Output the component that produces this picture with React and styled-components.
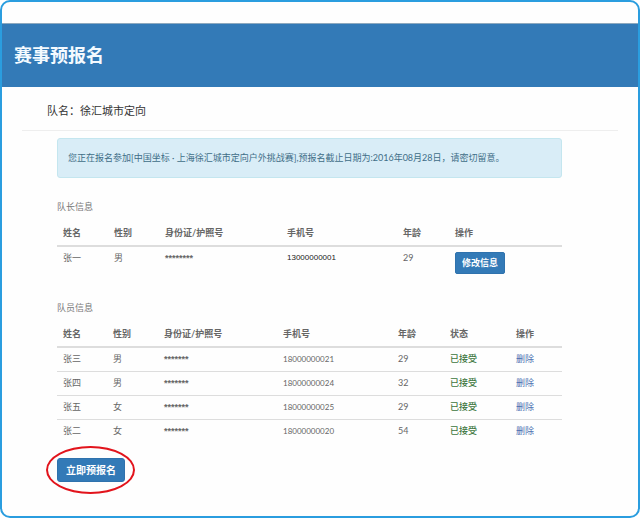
import styled, { createGlobalStyle, css } from 'styled-components';

const captain = {
    name: '张一', gender: '男', idCard: '********', phone: '13000000001', age: 29
};

const members = [
    { name: '张三', gender: '男', idCard: '*******', phone: '18000000021', age: 29, status: '已接受' },
    { name: '张四', gender: '男', idCard: '*******', phone: '18000000024', age: 32, status: '已接受' },
    { name: '张五', gender: '女', idCard: '*******', phone: '18000000025', age: 29, status: '已接受' },
    { name: '张二', gender: '女', idCard: '*******', phone: '18000000020', age: 54, status: '已接受' },
];

const captainColumns = [
    { title: '姓名', width: 51 },
    { title: '性别', width: 51 },
    { title: '身份证/护照号', width: 122 },
    { title: '手机号', width: 116 },
    { title: '年龄', width: 52 },
    { title: '操作', width: 113 },
];

const memberColumns = [
    { title: '姓名', width: 50 },
    { title: '性别', width: 51 },
    { title: '身份证/护照号', width: 119 },
    { title: '手机号', width: 115 },
    { title: '年龄', width: 52 },
    { title: '状态', width: 66 },
    { title: '操作', width: 52 },
];

const TableHead = ({ columns }) => (
    <>
        <colgroup>
            { columns.map(({ title, width }) => <Column key={title} $width={width} />) }
        </colgroup>
        <thead>
            <tr>
                { columns.map(({ title }) => <HeadCell key={title} scope="col">{title}</HeadCell>) }
            </tr>
        </thead>
    </>
);

const App = () => {
    return (
        <>
            <GlobalStyle />
            <Frame>
                <Header>
                    <Title>赛事预报名</Title>
                </Header>

                <TeamBar>队名：徐汇城市定向</TeamBar>

                <Content>
                    <Notice role="alert">
                        您正在报名参加[中国坐标 · 上海徐汇城市定向户外挑战赛],预报名截止日期为:2016年08月28日，请密切留意。
                    </Notice>

                    <Section $minHeight={101}>
                        <SectionTitle id="captain">队长信息</SectionTitle>
                        <Table aria-labelledby="captain">
                            <TableHead columns={captainColumns} />
                            <tbody>
                                <tr>
                                    <Cell>{captain.name}</Cell>
                                    <Cell>{captain.gender}</Cell>
                                    <Cell $masked>{captain.idCard}</Cell>
                                    <Cell $phone $dark>{captain.phone}</Cell>
                                    <Cell>{captain.age}</Cell>
                                    <Cell><Button type="button">修改信息</Button></Cell>
                                </tr>
                            </tbody>
                        </Table>
                    </Section>

                    <Section>
                        <SectionTitle id="members">队员信息</SectionTitle>
                        <Table aria-labelledby="members">
                            <TableHead columns={memberColumns} />
                            <tbody>
                                { members.map((member) => (
                                    <tr key={member.phone}>
                                        <Cell>{member.name}</Cell>
                                        <Cell>{member.gender}</Cell>
                                        <Cell $masked>{member.idCard}</Cell>
                                        <Cell $phone>{member.phone}</Cell>
                                        <Cell>{member.age}</Cell>
                                        <Cell><Status>{member.status}</Status></Cell>
                                        <Cell><DeleteLink href="#">删除</DeleteLink></Cell>
                                    </tr>
                                )) }
                            </tbody>
                        </Table>
                    </Section>

                    <Submit>
                        <Button type="button" $large>立即预报名</Button>
                        <Ring />
                    </Submit>
                </Content>
            </Frame>
        </>
    );
}

export default App;

const GlobalStyle = createGlobalStyle`
    * { box-sizing: border-box; }
    body {
        margin: 0;
        background: #fff;
        color: #666;
        font-family: Lato, "Noto Sans CJK SC", sans-serif;
        font-size: 9px;
        line-height: 12px;
    }
`;

const Frame = styled.div`
    min-height: 100vh;
    padding-top: 21px;
    border: 2px solid #2a9ddf;
    border-radius: 10px;
    background: #fefefe;
`;

const Header = styled.header`
    padding: 19px 12px 20px;
    border-top: 1px solid #8da9bf;
    background: #337ab7;
`;

const Title = styled.h1`
    margin: 0;
    color: #f4faff;
    font-size: 18px;
    font-weight: 700;
    line-height: 24px;
`;

const TeamBar = styled.div`
    margin: 0 20px;
    padding: 16px 25px 11px;
    border-bottom: 1px solid #eee;
    color: #333;
    font-size: 11px;
    line-height: 16px;
`;

const Content = styled.main`
    padding: 7px 76px 0 55px;
`;

const Notice = styled.div`
    padding: 13px 10px;
    border: 1px solid #c4e6ef;
    border-radius: 3px;
    background: #d9edf7;
    color: #3f6d87;
    margin-bottom: 23px;
`;

const Section = styled.section`
    min-height: ${({ $minHeight }) => $minHeight || 0}px;
`;

const SectionTitle = styled.h2`
    margin: 0 0 8px;
    color: #777;
    font-size: 9px;
    font-weight: 400;
    line-height: 12px;
`;

const Table = styled.table`
    width: 100%;
    border-collapse: collapse;
    table-layout: fixed;
`;

const Column = styled.col`
    width: ${({ $width }) => $width}px;
`;

const HeadCell = styled.th`
    height: 25px;
    padding: 0 6px;
    border-bottom: 2px solid #ddd;
    color: #666;
    font-weight: 700;
    text-align: left;
    white-space: nowrap;
`;

const Cell = styled.td`
    height: 24px;
    padding: 5px 6px 6px;
    vertical-align: top;

    tr + tr > & { border-top: 1px solid #ddd; }

    ${({ $masked }) => $masked && css`
        font-family: "Liberation Sans", sans-serif;
        font-weight: 700;
    `}
    ${({ $phone }) => $phone && css`font-size: 8px;`}
    ${({ $dark }) => $dark && css`
        color: #222;
        font-family: "Liberation Sans", sans-serif;
    `}
`;

const Status = styled.span`
    color: #3c763d;
    font-weight: 500;
`;

const DeleteLink = styled.a`
    color: #4a6fb0;
    text-decoration: none;
`;

const Button = styled.button`
    display: block;
    padding: 3px 6px;
    border: 1px solid #2f72ad;
    border-radius: 2px;
    background: #337ab7;
    color: #fff;
    font-family: inherit;
    font-size: 9px;
    font-weight: 700;
    line-height: 14px;
    cursor: pointer;

    ${({ $large }) => $large && css`
        padding: 4px 8px;
        border-radius: 3px;
        font-size: 10px;
    `}
`;

const Submit = styled.div`
    position: relative;
    width: fit-content;
    margin-top: 14px;
`;

/* red marker drawn round the submit button */
const Ring = styled.span`
    position: absolute;
    inset: -12px -10px -12px -11px;
    border: 2px solid #e2141c;
    border-radius: 50%;
    pointer-events: none;
`;
